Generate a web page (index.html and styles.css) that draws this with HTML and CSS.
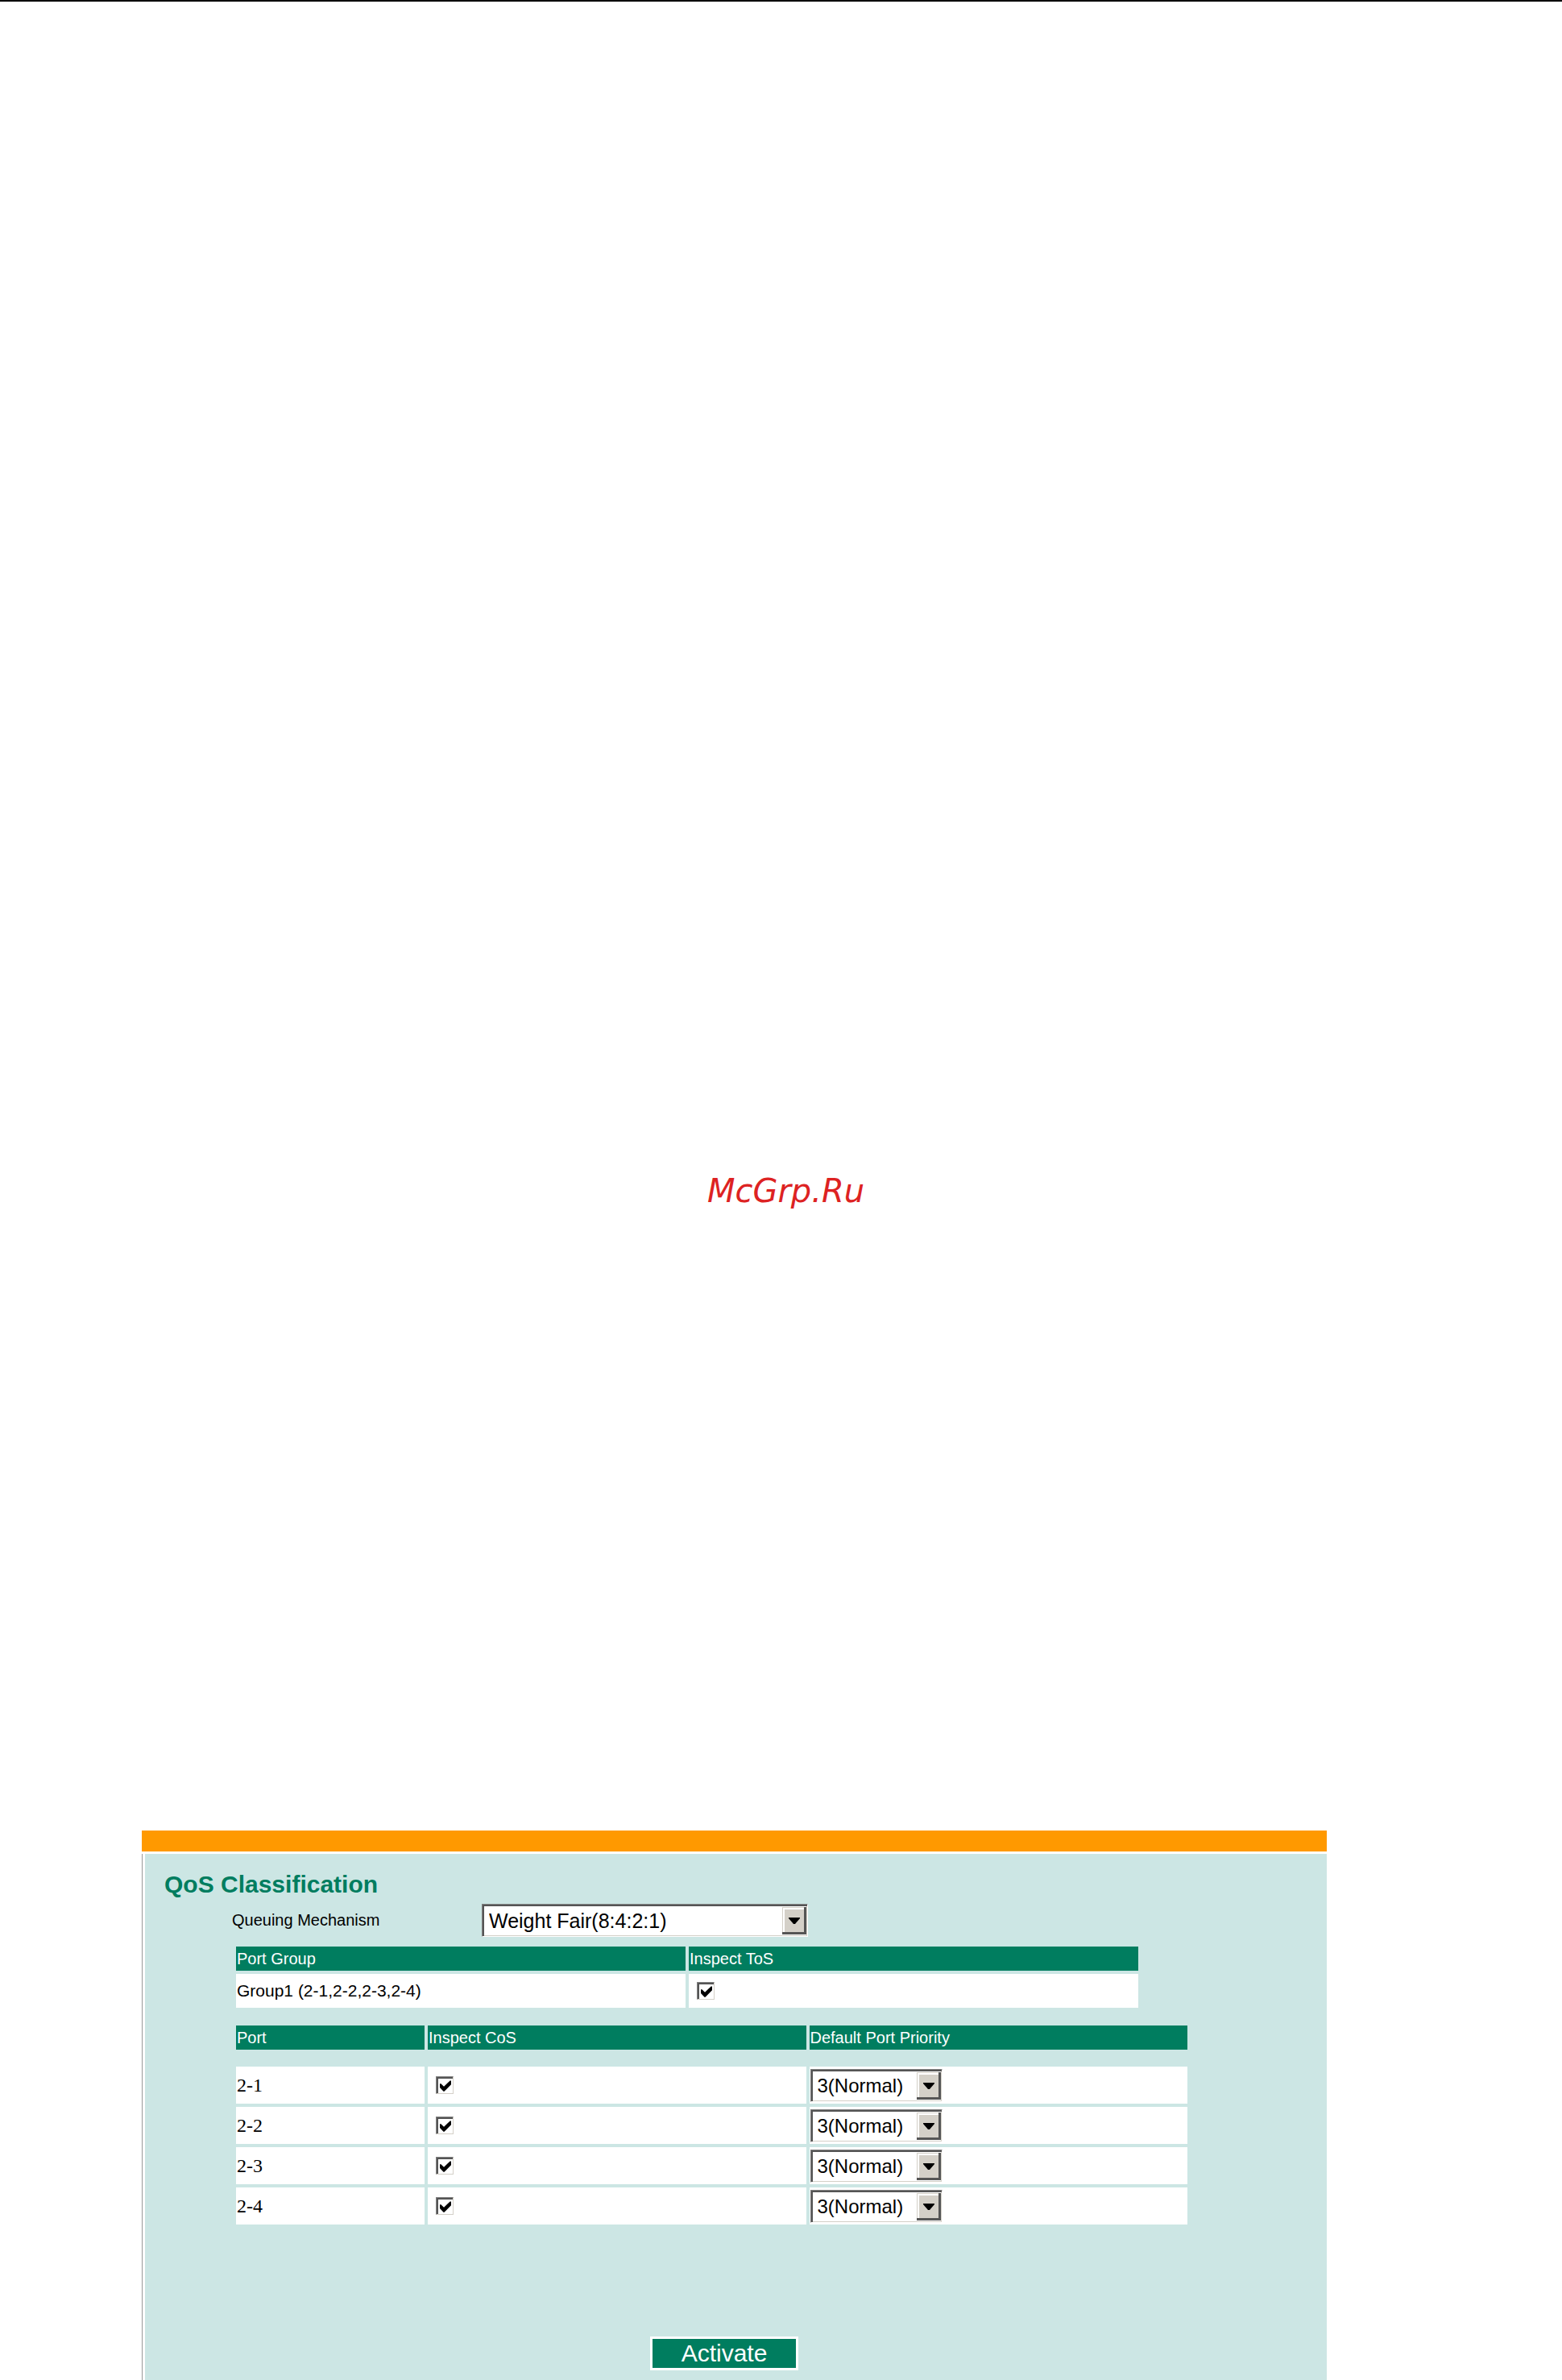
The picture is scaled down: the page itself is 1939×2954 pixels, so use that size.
FILE: index.html
```html
<!DOCTYPE html>
<html lang="en">
<head>
  <meta charset="UTF-8" />
  <meta name="viewport" content="width=device-width, initial-scale=1.0" />
  <title>QoS Classification</title>
  <link rel="stylesheet" href="styles.css">
</head>
<body>
  <p class="watermark">McGrp.Ru</p>

  <main class="page">
    <div class="top-bar"></div>
    <form class="panel">
      <h1>QoS Classification</h1>

      <!-- Queuing mechanism -->
      <div class="field">
        <label for="queuing">Queuing Mechanism</label>
        <span class="select wide">
          <select id="queuing">
            <option>Weight Fair(8:4:2:1)</option>
            <option>Strict</option>
          </select>
          <span class="arrow"><svg width="14" height="8" viewBox="0 0 14 8"><path d="M0 0h14v1L8 8H6L0 1z" /></svg></span>
        </span>
      </div>

      <!-- ToS per port group -->
      <table class="groups">
        <thead>
          <tr><th>Port Group</th><th>Inspect ToS</th></tr>
        </thead>
        <tbody>
          <tr>
            <td>Group1 (2-1,2-2,2-3,2-4)</td>
            <td><input type="checkbox" aria-label="Inspect ToS Group1" checked /></td>
          </tr>
        </tbody>
      </table>

      <!-- CoS and priority per port -->
      <table class="ports">
        <thead>
          <tr><th class="port-col">Port</th><th>Inspect CoS</th><th>Default Port Priority</th></tr>
        </thead>
        <tbody>
          <tr class="spacer"><td colspan="3"></td></tr>
          <tr>
            <td>2-1</td>
            <td><input type="checkbox" aria-label="Inspect CoS 2-1" checked /></td>
            <td>
              <span class="select">
                <select aria-label="Priority 2-1"><option>3(Normal)</option></select>
                <span class="arrow"><svg width="14" height="8" viewBox="0 0 14 8"><path d="M0 0h14v1L8 8H6L0 1z" /></svg></span>
              </span>
            </td>
          </tr>
          <tr>
            <td>2-2</td>
            <td><input type="checkbox" aria-label="Inspect CoS 2-2" checked /></td>
            <td>
              <span class="select">
                <select aria-label="Priority 2-2"><option>3(Normal)</option></select>
                <span class="arrow"><svg width="14" height="8" viewBox="0 0 14 8"><path d="M0 0h14v1L8 8H6L0 1z" /></svg></span>
              </span>
            </td>
          </tr>
          <tr>
            <td>2-3</td>
            <td><input type="checkbox" aria-label="Inspect CoS 2-3" checked /></td>
            <td>
              <span class="select">
                <select aria-label="Priority 2-3"><option>3(Normal)</option></select>
                <span class="arrow"><svg width="14" height="8" viewBox="0 0 14 8"><path d="M0 0h14v1L8 8H6L0 1z" /></svg></span>
              </span>
            </td>
          </tr>
          <tr>
            <td>2-4</td>
            <td><input type="checkbox" aria-label="Inspect CoS 2-4" checked /></td>
            <td>
              <span class="select">
                <select aria-label="Priority 2-4"><option>3(Normal)</option></select>
                <span class="arrow"><svg width="14" height="8" viewBox="0 0 14 8"><path d="M0 0h14v1L8 8H6L0 1z" /></svg></span>
              </span>
            </td>
          </tr>
        </tbody>
      </table>

      <div class="actions">
        <button type="button" class="activate">Activate</button>
      </div>
    </form>
  </main>
</body>
</html>
```
FILE: styles.css
```css
:root {
  --green: #007d5f;
  --panel: #cce6e4;
  --orange: #ff9900;
  --face: #d4d0c8;
  --dark: #555555;
}
* {
  box-sizing: border-box;
  margin: 0;
  padding: 0;
}
body {
  border-top: 2px solid #000;
  background: #fff;
  color: #000;
  font-family: "Liberation Sans", Arial, sans-serif;
  font-size: 20px;
}
.watermark {
  padding: 1452px 0 770px 12px;
  color: #dd2222;
  font: italic 40px/48px "DejaVu Sans", Verdana, sans-serif;
  text-align: center;
}
.page {
  margin: 0 292px 0 176px;
}
.top-bar {
  height: 26px;
  margin-bottom: 3px;
  background: var(--orange);
}
.panel {
  padding: 20px 0 12px 24px;
  margin-left: 4px;
  background: var(--panel);
  box-shadow: -3px 0 #fff, -4px 0 #999;
}
h1 {
  color: var(--green);
  font-size: 30px;
  line-height: 36px;
  font-weight: bold;
}
.field {
  display: flex;
  align-items: center;
  margin: 6px 0 8px 84px;
}
.field label {
  width: 310px;
}

/* drop-downs */
.select {
  position: relative;
  display: block;
  width: 164px;
  height: 41px;
}
.select.wide {
  width: 405px;
}
.select select {
  appearance: none;
  display: block;
  width: 100%;
  height: 100%;
  padding-left: 8px;
  border: 1px solid;
  border-color: #808080 #fff #fff #808080;
  border-radius: 0;
  background: #fff;
  box-shadow: inset 2px 2px var(--dark), inset -1px -1px var(--face);
  color: #000;
  font-family: inherit;
  font-size: 24px;
}
.select.wide select {
  font-size: 25px;
}
.arrow {
  position: absolute;
  top: 4px;
  right: 2px;
  bottom: 3px;
  width: 30px;
  display: flex;
  align-items: center;
  justify-content: center;
  background: var(--face);
  box-shadow: inset -3px -3px var(--dark), inset 1px 1px var(--face), inset 3px 3px #fff;
  pointer-events: none;
}

/* tables */
table {
  border-collapse: separate;
  border-spacing: 4px;
  table-layout: fixed;
  margin-left: 85px;
}
.groups {
  width: calc(100% - 315px);
}
.ports {
  width: calc(100% - 254px);
  margin-top: 14px;
}
.port-col {
  width: 234px;
}
th {
  height: 30px;
  padding-left: 1px;
  background: var(--green);
  color: #fff;
  font-weight: normal;
  line-height: 30px;
  text-align: left;
}
td {
  padding-left: 1px;
  background: #fff;
  vertical-align: middle;
}
.groups td {
  height: 42px;
  font-size: 21px;
}
.ports td {
  height: 46px;
  font-family: "Liberation Serif", "Times New Roman", serif;
  font-size: 24px;
}
.ports .select {
  font-family: "Liberation Sans", Arial, sans-serif;
}
.ports .spacer td {
  height: 13px;
  background: none;
}

/* check boxes */
input[type="checkbox"] {
  appearance: none;
  display: block;
  width: 22px;
  height: 22px;
  margin-left: 9px;
  border: 1px solid;
  border-color: #808080 var(--face) var(--face) #808080;
  background: #fff;
  box-shadow: inset 2px 2px var(--dark);
}
input[type="checkbox"]:checked::before {
  content: "";
  display: block;
  width: 14px;
  height: 14px;
  margin: 4px 0 0 4px;
  background: #000;
  clip-path: polygon(0 30%, 10% 30%, 36% 56%, 90% 4%, 100% 4%, 100% 38%, 40% 98%, 32% 98%, 0 64%);
}

.actions {
  margin: 135px 0 0 603px;
}
.activate {
  display: block;
  width: 184px;
  height: 42px;
  border: 3px solid #fff;
  background: var(--green);
  color: #fff;
  font-family: inherit;
  font-size: 30px;
  line-height: 36px;
}
```
